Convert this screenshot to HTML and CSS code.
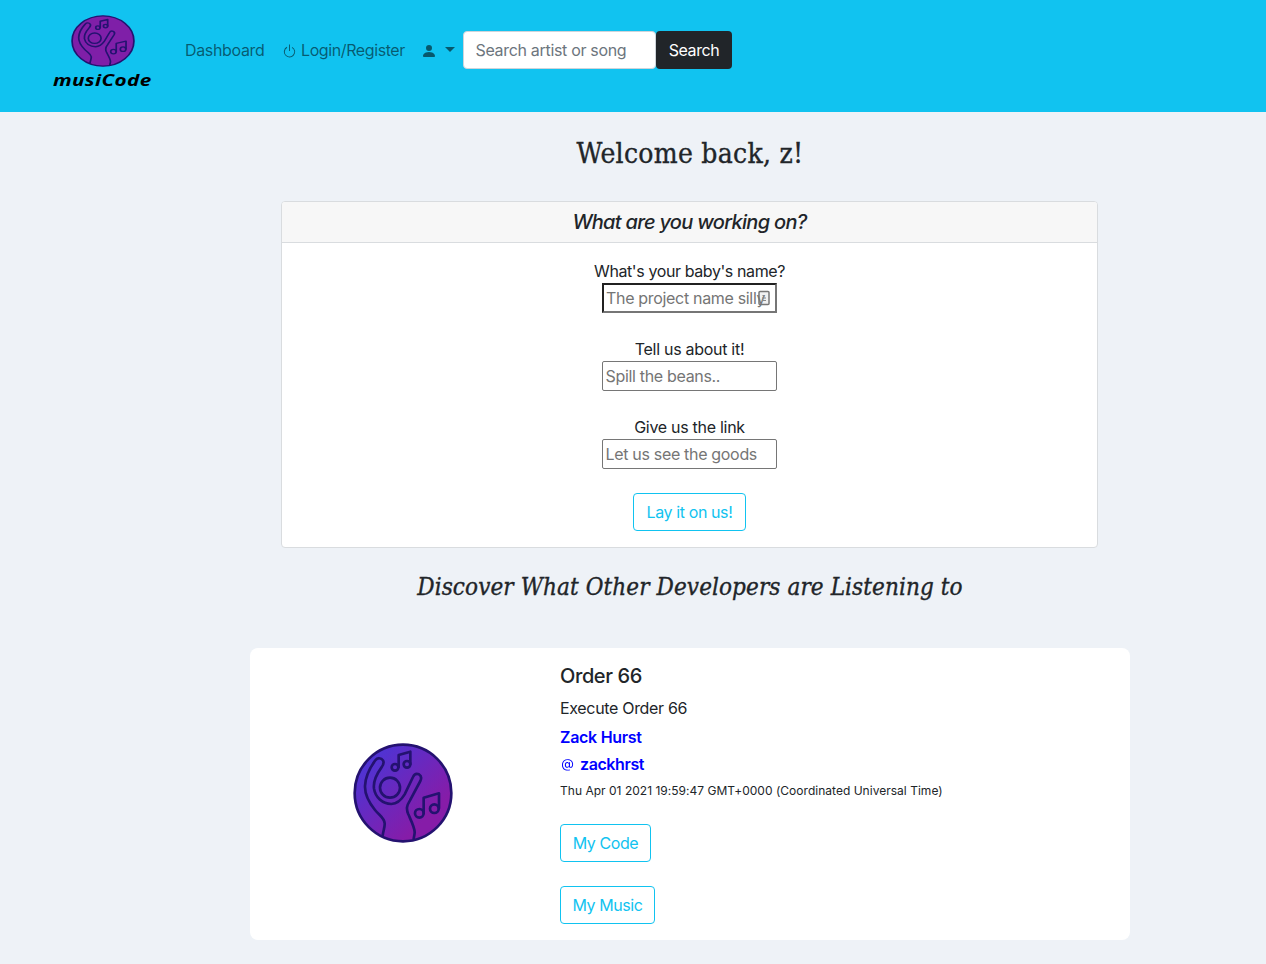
FILE: index.html
```html
<!DOCTYPE html>
<html lang="en">
<head>
<meta charset="utf-8">
<title>musiCode</title>
<link rel="stylesheet" href="styles.css">
</head>
<body>
<svg class="defs" aria-hidden="true">
  <defs>
    <linearGradient id="violet" x1="0" y1="0" x2="1" y2="1">
      <stop offset=".12" stop-color="#4b35d6"/>
      <stop offset=".75" stop-color="#861ca8"/>
    </linearGradient>
    <symbol id="emblem" viewBox="38 25 300 300" preserveAspectRatio="none">
      <g stroke="#241270" stroke-width="8" stroke-linecap="round" stroke-linejoin="round" fill="none">
        <circle cx="188" cy="175" r="145" class="disc"/>
        <path d="M127 302C129 288 134 276 133 266C132 250 118 243 104 226C86 204 73 182 74 154C75 124 91 96 105 77C111 68 123 69 128 77C132 84 129 91 123 99C110 117 98 139 101 162C105 188 126 208 153 208C173 207 184 194 193 179L218 127C222 118 229 116 236 119C243 123 244 130 240 139L209 197C199 213 197 222 204 239C212 257 223 279 223 293C223 300 221 306 220 312"/>
        <circle cx="149" cy="159" r="30"/>
        <circle cx="164" cy="98" r="10"/><circle cx="200" cy="89" r="10"/>
        <path d="M175 97V61L210 51V88"/>
        <circle cx="237" cy="236" r="13"/><circle cx="282" cy="222" r="13"/>
        <path d="M250 235V189L296 176V221"/>
      </g>
    </symbol>
  </defs>
</svg>
<header class="navbar">
  <a class="brand">
    <svg class="brand-emblem"><use href="#emblem"/></svg>
    <span class="brand-name">musiCode</span>
  </a>
  <nav class="links">
    <a class="link dashboard">Dashboard</a>
    <a class="link login"><svg class="power" viewBox="0 0 16 16" fill="currentColor"><path d="M7.5 1v7h1V1h-1z"/><path d="M3 8.812a4.999 4.999 0 0 1 2.578-4.375l-.485-.874A6 6 0 1 0 11 3.616l-.501.865A5 5 0 1 1 3 8.812z"/></svg><span>Login/Register</span></a>
    <a class="link account"><svg class="person" viewBox="0 0 16 16" fill="currentColor"><path d="M3 14s-1 0-1-1 1-4 6-4 6 3 6 4-1 1-1 1H3zm5-6a3 3 0 1 0 0-6 3 3 0 0 0 0 6z"/></svg><span class="caret"></span></a>
  </nav>
  <form class="search">
    <input class="search-input" type="text" placeholder="Search artist or song">
    <button class="search-button" type="button">Search</button>
  </form>
</header>
<main class="content">
  <h2 class="welcome"><span>Welcome back, z!</span></h2>
  <section class="card">
    <h5 class="card-header">What are you working on?</h5>
    <form class="card-body">
      <label class="field"><span class="label">What's your baby's name?</span>
        <span class="input-wrap"><input class="input first" type="text" placeholder="The project name silly">
          <svg class="autofill" viewBox="0 0 12 16"><rect x="1" y="1.5" width="10" height="13" rx="1" fill="#888" fill-opacity=".12" stroke="#777" stroke-width="1.5"/><path d="M4.5 5.5h2M4 8h4M4 10.5h4" stroke="#888"/></svg></span>
      </label>
      <label class="field"><span class="label loose">Tell us about it!</span>
        <input class="input" type="text" placeholder="Spill the beans.."></label>
      <label class="field"><span class="label loose">Give us the link</span>
        <input class="input" type="text" placeholder="Let us see the goods"></label>
      <button class="btn lay" type="button">Lay it on us!</button>
    </form>
  </section>
  <h3 class="discover"><span>Discover What Other Developers are Listening to</span></h3>
  <article class="post">
    <div class="post-art"><svg class="post-emblem"><use href="#emblem"/></svg></div>
    <div class="post-body">
      <h5 class="post-title">Order 66</h5>
      <p class="post-text">Execute Order 66</p>
      <a class="author loose">Zack Hurst</a>
      <a class="author handle"><svg class="at" viewBox="0 0 16 16" fill="currentColor"><path d="M13.106 7.222c0-2.967-2.249-5.032-5.482-5.032-3.35 0-5.646 2.318-5.646 5.702 0 3.493 2.235 5.708 5.762 5.708.862 0 1.689-.123 2.304-.335v-.862c-.43.199-1.354.328-2.29.328-2.926 0-4.813-1.88-4.813-4.798 0-2.844 1.921-4.881 4.594-4.881 2.735 0 4.608 1.688 4.608 4.156 0 1.682-.554 2.769-1.416 2.769-.492 0-.772-.28-.772-.76V5.206H8.923v.834h-.11c-.266-.595-.881-.964-1.6-.964-1.4 0-2.378 1.162-2.378 2.823 0 1.737.957 2.906 2.379 2.906.8 0 1.415-.39 1.709-1.087h.11c.081.67.703 1.148 1.503 1.148 1.572 0 2.57-1.415 2.57-3.643zm-7.177.704c0-1.197.54-1.907 1.456-1.907.93 0 1.524.738 1.524 1.907S8.308 9.84 7.371 9.84c-.895 0-1.442-.725-1.442-1.914z"/></svg><span>zackhrst</span></a>
      <small class="date">Thu Apr 01 2021 19:59:47 GMT+0000 (Coordinated Universal Time)</small>
      <button class="btn code" type="button">My Code</button>
      <button class="btn music" type="button">My Music</button>
    </div>
  </article>
</main>
</body>
</html>
```
FILE: styles.css
```css
* { box-sizing: border-box; }
body { margin: 0; min-height: 964px; background: #eef2f7; color: #212529; font: 16px/24px Inter, "Liberation Sans", sans-serif; letter-spacing: -0.025em; }
h2, h3, h5, p { margin: 0; }
input, button { font: inherit; letter-spacing: inherit; }
.defs { position: absolute; width: 0; height: 0; }
.disc { fill: var(--disc, url(#violet)); }

.navbar { display: flex; height: 112px; padding-left: 52px; background: #11c3f0; }
.brand { display: flex; flex-direction: column; align-items: center; width: 101px; padding-top: 15px; }
.brand-emblem { width: 64px; height: 52px; --disc: #7f1fa8; }
.brand-name { margin: 3px 1px 0 0; color: #000; font: italic bold 16px/20px "Open Sans", sans-serif; letter-spacing: 0.02em; white-space: nowrap; transform: scaleX(1.29); }
.links { display: flex; height: 24px; margin: 38px 0 0 32px; color: rgba(0, 0, 0, .55); }
.link { display: flex; align-items: center; white-space: nowrap; }
.dashboard { width: 97px; letter-spacing: -0.021em; }
.login { width: 139px; gap: 4px; }
.power { width: 15px; height: 16px; margin-top: 2px; }
.account { width: 42px; }
.person { flex: none; width: 16px; height: 16px; margin-top: 2px; }
.caret { flex: none; margin: -2px 0 0 8px; border: 5px solid transparent; border-top-color: currentColor; border-bottom: 0; }
.search { display: flex; height: 38px; margin-top: 31px; }
.search-input { width: 193px; padding: 6px 11.5px; border: 1px solid #ced4da; border-radius: 4px; background: #fff; letter-spacing: -0.02em; }
.search-input::placeholder { color: #6c757d; opacity: 1; }
.search-button { width: 76px; padding: 0; border: 0; border-radius: 4px; background: #212529; color: #fff; }

.content { width: 880px; margin-left: 250px; }
.welcome, .discover { display: flex; justify-content: center; font-family: "Roboto Slab", "DejaVu Serif Condensed", "DejaVu Serif", serif; font-stretch: condensed; font-weight: 400; white-space: nowrap; -webkit-text-stroke: .35px currentColor; }
.welcome { padding-top: 25px; font-size: 28px; line-height: 34px; letter-spacing: 0.28px; }
.card { width: 817px; height: 347px; margin: 30px 0 0 31px; border: 1px solid #d9dcdf; border-radius: 4px; background: #fff; overflow: hidden; }
.card-header { height: 41px; border-bottom: 1px solid #d9dcdf; background: #f7f7f7; font-size: 20px; font-style: italic; font-weight: 500; line-height: 40px; letter-spacing: -0.7px; text-align: center; }
.card-body { display: flex; flex-direction: column; align-items: center; padding-top: 16px; }
.field { display: flex; flex-direction: column; align-items: center; height: 78px; }
.loose { letter-spacing: -0.018em; }
.input-wrap { display: flex; position: relative; }
.input { width: 175px; height: 30px; padding: 1px 2.5px; border: 1px solid #767676; border-radius: 2px; background: #fff; letter-spacing: -0.02em; }
.input.first { padding: 1px 2px; border: 2px inset #767676; border-radius: 0; }
.input::placeholder { color: #757575; opacity: 1; }
.autofill { position: absolute; top: 7px; right: 7px; width: 12px; height: 16px; }
.btn { height: 38px; padding: 0; border: 1px solid #11c3f0; border-radius: 4px; background: transparent; color: #11c3f0; }
.lay { width: 113px; }
.discover { margin-top: 24px; font-size: 24px; font-style: italic; line-height: 30px; letter-spacing: 0.1px; }

.post { display: flex; height: 292px; margin-top: 46px; border-radius: 8px; background: #fff; }
.post-art { display: flex; justify-content: center; align-items: center; width: 305px; padding-bottom: 2px; }
.post-emblem { width: 100px; height: 100px; }
.post-body { display: flex; flex-direction: column; align-items: flex-start; padding: 16px 0 0 5px; }
.post-title { font-size: 20px; font-weight: 500; line-height: 24px; }
.post-text { margin-top: 8px; letter-spacing: -0.02em; }
.author { margin-top: 5px; color: #00f; font-weight: 600; }
.handle { display: flex; align-items: center; gap: 4px; margin-top: 3px; }
.at { width: 16px; height: 16px; margin-top: 2px; }
.date { margin-top: 5px; font-size: 12px; line-height: 20px; letter-spacing: 0.02px; }
.code { width: 91px; margin-top: 23px; }
.music { width: 95px; margin-top: 24px; }
```
